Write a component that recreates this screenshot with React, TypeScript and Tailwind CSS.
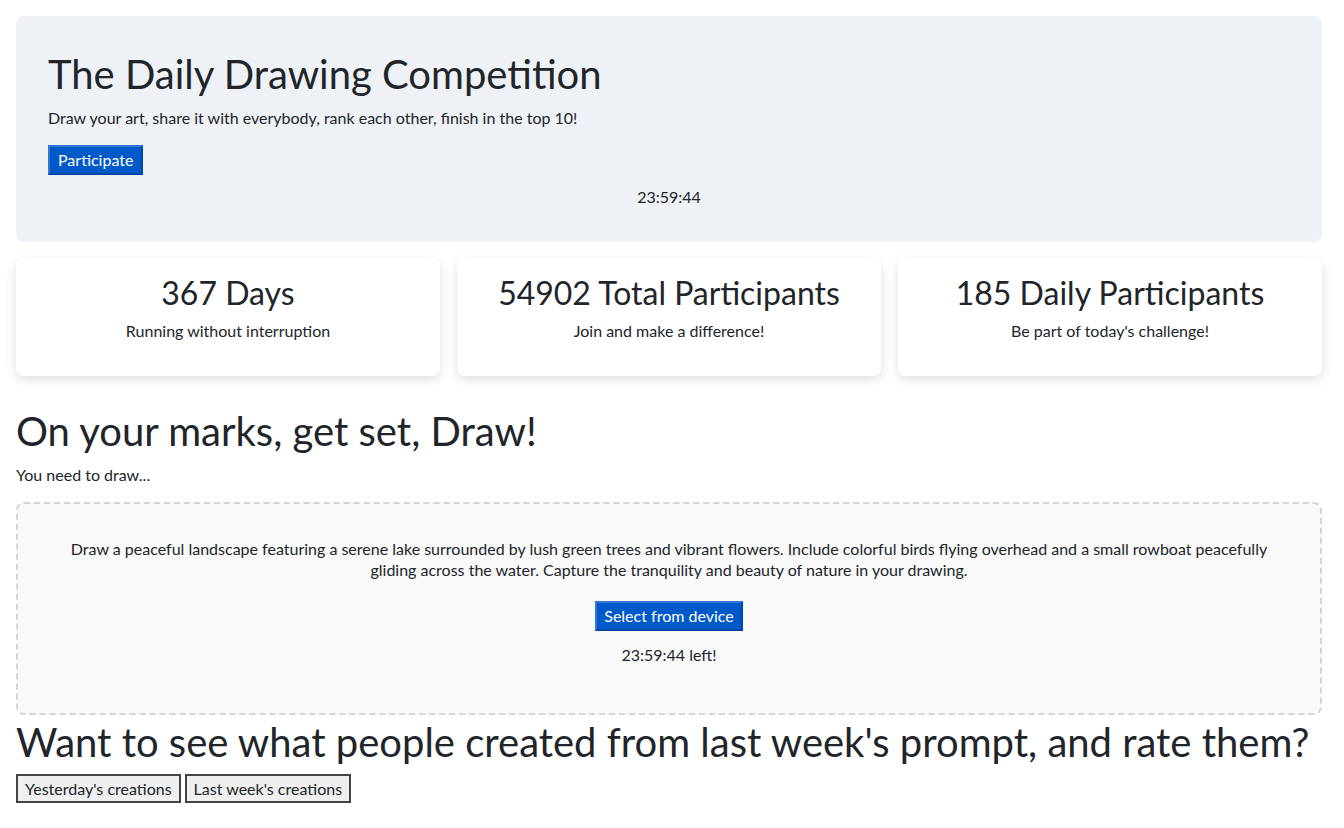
const stats = [
  { value: '367 Days', label: 'Running without interruption' },
  { value: '54902 Total Participants', label: 'Join and make a difference!' },
  { value: '185 Daily Participants', label: "Be part of today's challenge!" },
];

export default function App() {
  return (
    <div className="min-h-screen bg-white pt-4 pl-4 pr-[22px] text-[16px] leading-[24px] text-[#212529] font-['Lato',sans-serif]">
      <section className="rounded-lg bg-[#eef1f6] px-8 pt-[34px] pb-[33px]">
        <h1 className="text-[40px] leading-[48px] mb-[8px]">The Daily Drawing Competition</h1>
        <p className="mb-[15px]">Draw your art, share it with everybody, rank each other, finish in the top 10!</p>
        <button className="bg-[#0059c9] text-white px-2 h-[30px] border-2 border-[#0047a6] border-t-[#3377d6] border-l-[#3377d6]">
          Participate
        </button>
        <p className="text-center mt-[10px]">23:59:44</p>
      </section>

      <div className="grid grid-cols-3 gap-[17px] mt-[16px]">
        {stats.map((s) => (
          <div key={s.value} className="rounded-lg bg-white shadow-[0_4px_12px_rgba(0,0,0,0.12)] h-[118px] flex flex-col items-center pt-[15px]">
            <div className="text-[32px] leading-[40px]">{s.value}</div>
            <div className="mt-[6px]">{s.label}</div>
          </div>
        ))}
      </div>

      <h2 className="text-[40px] leading-[48px] mt-[31px]">On your marks, get set, Draw!</h2>
      <p className="mt-[8px]">You need to draw...</p>

      <div className="mt-[15px] h-[213px] rounded-lg border-2 border-dashed border-[#d5d5d5] bg-[#f9f9f9] flex flex-col items-center pt-[34px] px-[50px] text-center">
        <p className="leading-[21px]">
          Draw a peaceful landscape featuring a serene lake surrounded by lush green trees and vibrant flowers. Include colorful birds flying overhead and a small rowboat peacefully gliding across the water. Capture the tranquility and beauty of nature in your drawing.
        </p>
        <button className="mt-[21px] bg-[#0059c9] text-white px-[7px] h-[30px] border-2 border-[#0047a6] border-t-[#3377d6] border-l-[#3377d6]">
          Select from device
        </button>
        <p className="mt-[12px]">23:59:44 left!</p>
      </div>

      <h2 className="text-[40px] leading-[48px] mt-[3px]">Want to see what people created from last week's prompt, and rate them?</h2>
      <div className="flex gap-[4px] mt-[8px]">
        <button className="bg-[#efefef] border-2 border-[#444] px-[7px] h-[29px]">Yesterday's creations</button>
        <button className="bg-[#efefef] border-2 border-[#444] px-[7px] h-[29px]">Last week's creations</button>
      </div>
    </div>
  );
}
